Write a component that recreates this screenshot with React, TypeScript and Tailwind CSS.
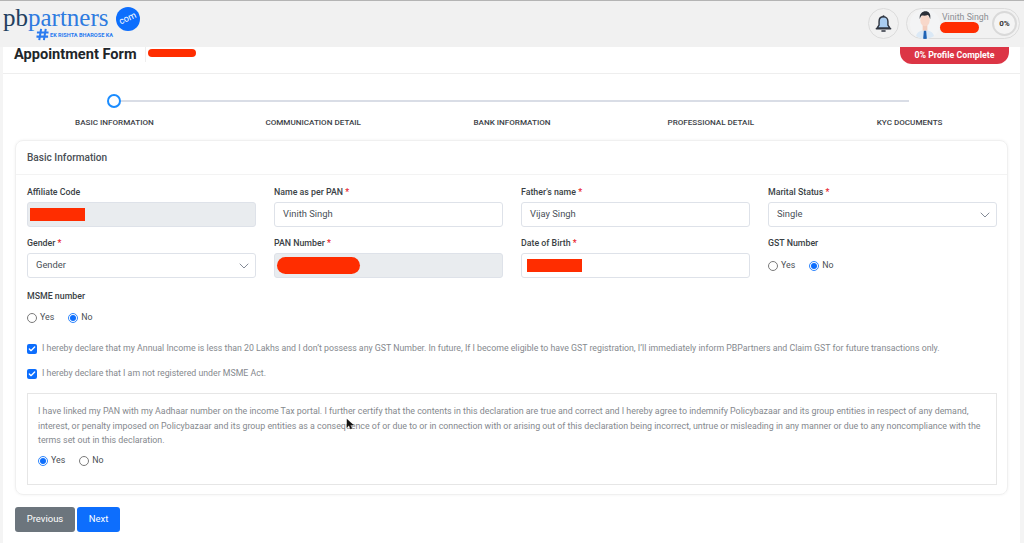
import React from "react";
import { ChevronDown, Check } from "lucide-react";

const STEPS = ["BASIC INFORMATION", "COMMUNICATION DETAIL", "BANK INFORMATION", "PROFESSIONAL DETAIL", "KYC DOCUMENTS"];

const Label = ({ text, required }: { text: string; required?: boolean }) => (
  <div className="h-[12px] leading-[12px] text-[8.8px] font-medium text-[#3a3f45] mb-[4px]">
    {text}
    {required && <span className="text-[#e8202a]"> *</span>}
  </div>
);

const Box = ({ children, grey }: { children: React.ReactNode; grey?: boolean }) => (
  <div
    className={`h-[25px] rounded-[3px] border border-[#dee2e9] flex items-center justify-between text-[9.4px] text-[#495057] ${
      grey ? "bg-[#e9ecef]" : "bg-white"
    }`}
  >
    {children}
  </div>
);

const Radio = ({ label, on }: { label: string; on?: boolean }) => (
  <span className="flex items-center gap-[3px] text-[8.8px] text-[#4a4f55]">
    {on ? (
      <span className="w-[10px] h-[10px] rounded-full border-[1.5px] border-[#2f86fd] bg-white flex items-center justify-center">
        <span className="w-[6px] h-[6px] rounded-full bg-[#0d6efd]" />
      </span>
    ) : (
      <span className="w-[10px] h-[10px] rounded-full border border-[#7a7a7a] bg-white" />
    )}
    {label}
  </span>
);

const Tick = ({ label }: { label: string }) => (
  <div className="flex items-center gap-[5px] h-[12px] whitespace-nowrap text-[8.78px] text-[#85898e]">
    <span className="w-[10px] h-[10px] rounded-[2px] bg-[#0d6efd] flex items-center justify-center">
      <Check className="w-[8px] h-[8px] text-white" strokeWidth={4} />
    </span>
    {label}
  </div>
);

const Blob = ({ cls }: { cls: string }) => <span className={`block bg-[#ff2d00] ${cls}`} />;

const Hash = () => (
  <svg viewBox="0 0 14 14" className="w-[13px] h-[13px] shrink-0">
    <path d="M5.500 1L3.500 13M10.500 1L8.500 13M1 4.800h12.500M.5 9.300h12.500" stroke="#2a7bf0" strokeWidth="2.200" fill="none" />
  </svg>
);

const Bell = () => (
  <svg viewBox="0 0 24 24" className="w-[19px] h-[19px]">
    <path d="M12 3.500c-3.600 0-5.600 2.700-5.600 6v4.500L4 17.600h16L17.600 14V9.500c0-3.300-2-6-5.600-6z" fill="#a9cdf2" stroke="#2f3540" strokeWidth="1.800" strokeLinejoin="round" />
    <path d="M3 18.600h18" stroke="#2f3540" strokeWidth="2" strokeLinecap="round" />
    <path d="M10 21.500h4" stroke="#2f3540" strokeWidth="1.800" strokeLinecap="round" />
    <circle cx="12" cy="2.800" r="1.300" fill="#2f3540" />
  </svg>
);

const Avatar = () => (
  <svg viewBox="0 0 32 32" className="w-[30px] h-[30px] rounded-full bg-[#f3f4f5]">
    <path d="M6 32c0-7 4-9 10-10 6 1 10 3 10 10z" fill="#dbe9f6" />
    <path d="M14.800 23h2.400l.8 9h-4z" fill="#1e63b5" />
    <rect x="13.500" y="16" width="5" height="7" fill="#f3cdbd" />
    <ellipse cx="16" cy="12" rx="5" ry="6.500" fill="#f8d8ca" />
    <path d="M10.500 11c-1-6 3-8.500 6-8.500 3.500 0 6 2.500 5 8.500-.6-2.500-1.500-4-2.500-4.500-2.500 1-6 .5-6.500.5-1 .8-1.600 2.200-2 4z" fill="#2b3038" />
  </svg>
);

export default function App() {
  return (
    <div className="w-[1024px] h-[543px] overflow-hidden bg-[#f4f4f4] font-['Roboto',sans-serif]">
      {/* Top bar */}
      <header className="h-[47px] bg-[#f1f1f1] border-t border-[#b4b4b4] flex items-start justify-between pr-[4px]">
        <div className="flex items-start pl-[3px] pt-[6px]">
          <div className="w-[106px]">
            <div className="h-[21px] leading-[22px] text-[25px] font-['Liberation_Serif',serif] whitespace-nowrap">
              <span className="text-[#23405f]">pb</span>
              <span className="text-[#2e7be0]">partners</span>
            </div>
            <div className="flex items-center gap-[1px] ml-[33px] h-[13px] text-[#2a7bf0]">
              <Hash />
              <span className="text-[5.6px] leading-[8px] font-bold whitespace-nowrap">EK RISHTA BHAROSE KA</span>
            </div>
          </div>
          <div className="ml-[7px] w-[24px] h-[24px] rounded-full bg-[#0d6efd] text-white text-[9px] flex items-center justify-center">
            <span className="-rotate-[25deg]">com</span>
          </div>
        </div>
        <div className="flex items-center gap-[7px] pt-[7px]">
          <div className="w-[31px] h-[31px] rounded-full border border-[#dcdcdc] flex items-center justify-center">
            <Bell />
          </div>
          <div className="relative w-[114px] h-[31px] rounded-full border border-[#dcdcdc] flex items-center pl-[3px]">
            <Avatar />
            <div className="ml-[2px] text-[8.8px] leading-[12px] -mt-[13px] text-[#8c8f93]">Vinith Singh</div>
            <div className="absolute right-[2px] top-[2px] w-[25px] h-[25px] rounded-full border-2 border-[#d9d9d9] bg-[#f4f4f4] flex items-center justify-center text-[8px] font-bold text-[#333]">
              0%
            </div>
            <Blob cls="absolute left-[33px] top-[13px] w-[39px] h-[11px] rounded-full" />
          </div>
        </div>
      </header>

      <main className="ml-[3px] w-[1017px] h-[496px] bg-white">
        {/* Title row */}
        <div className="h-[27px] border-b border-[#eeeeee] flex items-start justify-between pl-[11px] pr-[11px]">
          <div className="flex items-center h-[15px]">
            <h1 className="text-[14.6px] leading-[15px] font-bold text-[#212529] pr-[8px] border-r border-[#eeeeee]">Appointment Form</h1>
            <Blob cls="ml-[2px] -mt-[4px] w-[48px] h-[8px] rounded-full" />
          </div>
          <div className="w-[109px] h-[17px] rounded-b-[12px] bg-[#dc3545] text-white text-[8.8px] font-bold flex items-center justify-center">
            0% Profile Complete
          </div>
        </div>

        {/* Stepper */}
        <div className="pl-[12px] pr-[11px]">
          <div className="h-[54px] pt-[20px] pl-[92px] pr-[100px]">
            <div className="flex items-center">
              <span className="w-[14px] h-[14px] rounded-full border-2 border-[#1a8cff] bg-white" />
              <span className="flex-1 h-[2px] bg-[#d9dde6]" />
            </div>
            <div className="-ml-[92px] -mr-[100px] grid grid-cols-5 mt-[9px]">
              {STEPS.map((s) => (
                <div key={s} className="text-center text-[8.1px] font-medium leading-[10px] text-[#3d4247]">
                  {s}
                </div>
              ))}
            </div>
          </div>
        </div>

        {/* Card */}
        <section className="ml-[12px] mt-[12px] w-[993px] h-[355px] rounded-[8px] border border-[#f0f0f0] shadow-[0_0_3px_rgba(0,0,0,0.06)]">
          <div className="h-[34px] border-b border-[#f3f3f3] pl-[11px] flex items-center text-[10.1px] font-medium text-[#4a4f55]">
            Basic Information
          </div>
          <div className="px-[11px] pt-[11px]">
            <div className="grid grid-cols-4 gap-x-[18px] gap-y-[10px] w-[970px]">
              <div>
                <Label text="Affiliate Code" />
                <Box grey>
                  <Blob cls="ml-[2px] w-[55px] h-[13px]" />
                </Box>
              </div>
              <div>
                <Label text="Name as per PAN" required />
                <Box>
                  <span className="pl-[8px]">Vinith Singh</span>
                </Box>
              </div>
              <div>
                <Label text="Father's name" required />
                <Box>
                  <span className="pl-[8px]">Vijay Singh</span>
                </Box>
              </div>
              <div>
                <Label text="Marital Status" required />
                <Box>
                  <span className="pl-[8px]">Single</span>
                  <ChevronDown className="w-[16px] h-[16px] mr-[3px] text-[#6b7482]" strokeWidth={1.25} />
                </Box>
              </div>
              <div>
                <Label text="Gender" required />
                <Box>
                  <span className="pl-[8px]">Gender</span>
                  <ChevronDown className="w-[16px] h-[16px] mr-[3px] text-[#6b7482]" strokeWidth={1.25} />
                </Box>
              </div>
              <div>
                <Label text="PAN Number" required />
                <Box grey>
                  <Blob cls="ml-[2px] mr-auto w-[83px] h-[17px] rounded-full" />
                </Box>
              </div>
              <div>
                <Label text="Date of Birth" required />
                <Box>
                  <Blob cls="ml-[5px] w-[55px] h-[13px]" />
                </Box>
              </div>
              <div>
                <Label text="GST Number" />
                <div className="h-[25px] flex items-center gap-[14px]">
                  <Radio label="Yes" />
                  <Radio label="No" on />
                </div>
              </div>
            </div>

            <div className="mt-[12px]">
              <Label text="MSME number" />
              <div className="mt-[10px] h-[12px] flex items-center gap-[14px]">
                <Radio label="Yes" />
                <Radio label="No" on />
              </div>
            </div>

            <div className="mt-[19px] flex flex-col gap-[13px]">
              <Tick label="I hereby declare that my Annual Income is less than 20 Lakhs and I don’t possess any GST Number. In future, If I become eligible to have GST registration, I’ll immediately inform PBPartners and Claim GST for future transactions only." />
              <Tick label="I hereby declare that I am not registered under MSME Act." />
            </div>

            <div className="relative mt-[13px] w-[970px] h-[92px] border border-[#e6e6e6] px-[10px] pt-[10px]">
              <p className="text-[8.85px] leading-[14.5px] text-[#85898e]">
                I have linked my PAN with my Aadhaar number on the income Tax portal. I further certify that the contents in this declaration are true and correct and I hereby agree to indemnify Policybazaar and its group entities in respect of any demand, interest, or penalty imposed on Policybazaar and its group entities as a consequence of or due to or in connection with or arising out of this declaration being incorrect, untrue or misleading in any manner or due to any noncompliance with the terms set out in this declaration.
              </p>
              <div className="mt-[7px] h-[12px] flex items-center gap-[14px]">
                <Radio label="Yes" on />
                <Radio label="No" />
              </div>
              <svg viewBox="0 0 12 16" className="absolute left-[318px] top-[24px] w-[9px] h-[12px]">
                <path d="M1 1v12l3-3 2 5 2-1-2-4.500h4.500z" fill="#111" />
              </svg>
            </div>
          </div>
        </section>

        {/* Actions */}
        <div className="ml-[12px] mt-[12px] flex gap-[2px]">
          <button className="w-[60px] h-[25px] rounded-[3px] bg-[#6c757d] text-white text-[9.5px]">Previous</button>
          <button className="w-[43px] h-[25px] rounded-[3px] bg-[#0d6efd] text-white text-[9.5px]">Next</button>
        </div>
      </main>
    </div>
  );
}
